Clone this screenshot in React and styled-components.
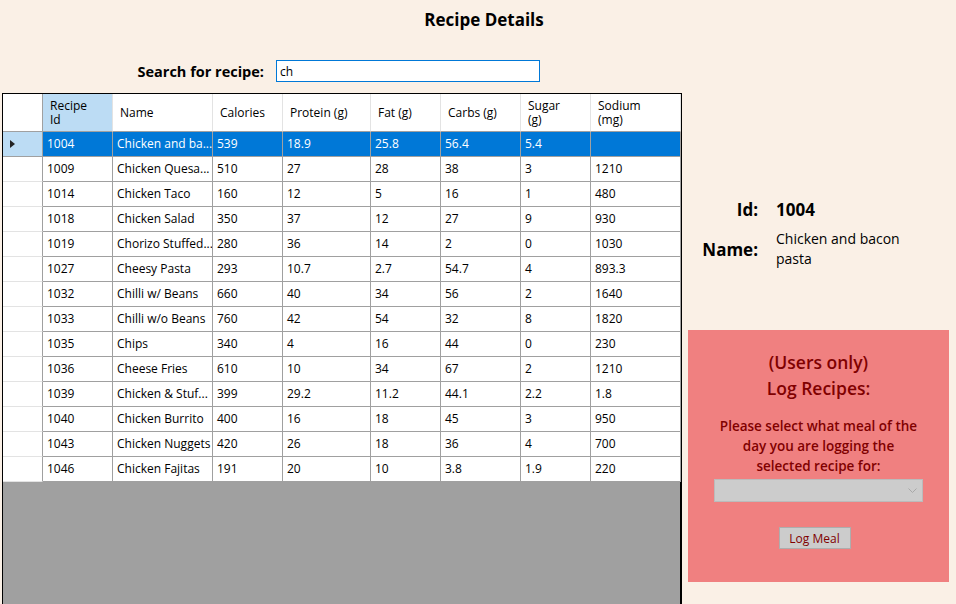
import React from "react";
import styled, { createGlobalStyle } from "styled-components";

const GlobalStyle = createGlobalStyle`
  html, body {
    margin: 0;
    padding: 0;
    background: #faf0e6;
    font-family: "Open Sans", "Noto Sans", "Liberation Sans", sans-serif;
  }
`;

const columns = [
  { key: "id", label: "Recipe\nId", w: 70, active: true },
  { key: "name", label: "Name", w: 100 },
  { key: "cal", label: "Calories", w: 70 },
  { key: "protein", label: "Protein (g)", w: 88 },
  { key: "fat", label: "Fat (g)", w: 70 },
  { key: "carbs", label: "Carbs (g)", w: 80 },
  { key: "sugar", label: "Sugar\n(g)", w: 70 },
  { key: "sodium", label: "Sodium\n(mg)", w: 90 },
];

const rows = [
  ["1004", "Chicken and ba...", "539", "18.9", "25.8", "56.4", "5.4", ""],
  ["1009", "Chicken Quesa...", "510", "27", "28", "38", "3", "1210"],
  ["1014", "Chicken Taco", "160", "12", "5", "16", "1", "480"],
  ["1018", "Chicken Salad", "350", "37", "12", "27", "9", "930"],
  ["1019", "Chorizo Stuffed...", "280", "36", "14", "2", "0", "1030"],
  ["1027", "Cheesy Pasta", "293", "10.7", "2.7", "54.7", "4", "893.3"],
  ["1032", "Chilli w/ Beans", "660", "40", "34", "56", "2", "1640"],
  ["1033", "Chilli w/o Beans", "760", "42", "54", "32", "8", "1820"],
  ["1035", "Chips", "340", "4", "16", "44", "0", "230"],
  ["1036", "Cheese Fries", "610", "10", "34", "67", "2", "1210"],
  ["1039", "Chicken & Stuf...", "399", "29.2", "11.2", "44.1", "2.2", "1.8"],
  ["1040", "Chicken Burrito", "400", "16", "18", "45", "3", "950"],
  ["1043", "Chicken Nuggets", "420", "26", "18", "36", "4", "700"],
  ["1046", "Chicken Fajitas", "191", "20", "10", "3.8", "1.9", "220"],
];

const template = `40px ${columns.map((c) => c.w + "px").join(" ")}`;

const Page = styled.div`
  width: 956px;
  height: 604px;
  overflow: hidden;
  display: flex;
  flex-direction: column;
`;

const Title = styled.h1`
  margin: 0;
  padding: 8px 0 0 12px;
  font-size: 17px;
  line-height: 24px;
  font-weight: 700;
  text-align: center;
  color: #000;
`;

const SearchRow = styled.div`
  display: flex;
  align-items: center;
  gap: 12px;
  margin-top: 28px;
  height: 22px;
`;

const SearchLabel = styled.label`
  width: 264px;
  text-align: right;
  font-size: 14.5px;
  font-weight: 700;
  color: #000;
`;

const SearchInput = styled.input`
  box-sizing: border-box;
  width: 264px;
  height: 22px;
  border: 1px solid #0078d7;
  background: #fff;
  padding: 0 3px;
  font-family: inherit;
  font-size: 12px;
  outline: none;
`;

const Main = styled.div`
  display: flex;
  align-items: flex-start;
  margin-top: 11px;
  flex: 1;
`;

const GridFrame = styled.div`
  box-sizing: border-box;
  margin-left: 2px;
  width: 680px;
  height: 520px;
  border: 1px solid #000;
  border-right-width: 2px;
  background: #a0a0a0;
`;

const GridRow = styled.div`
  display: grid;
  grid-template-columns: ${template};
  height: ${(p) => (p.$header ? "38px" : "25px")};
`;

const HeadCell = styled.div`
  box-sizing: border-box;
  display: flex;
  align-items: center;
  padding: 1px 0 0 7px;
  background: ${(p) => (p.$active ? "#bcdcf4" : "#fff")};
  border-right: 1px solid ${(p) => (p.$corner ? "#a0a0a0" : "#e3e3e3")};
  border-bottom: 1px solid #a0a0a0;
  font-size: 12px;
  line-height: 14px;
  white-space: pre-line;
  color: #000;
`;

const RowHead = styled.div`
  box-sizing: border-box;
  display: flex;
  align-items: center;
  padding-left: 7px;
  background: ${(p) => (p.$selected ? "#bcdcf4" : "#fff")};
  border-right: 1px solid #a0a0a0;
  border-bottom: 1px solid ${(p) => (p.$selected ? "#a0a0a0" : "#e3e3e3")};
`;

const Arrow = styled.span`
  width: 0;
  height: 0;
  border-top: 4px solid transparent;
  border-bottom: 4px solid transparent;
  border-left: 5px solid #222;
`;

const Cell = styled.div`
  box-sizing: border-box;
  padding: 0 2px 0 4px;
  line-height: 24px;
  font-size: 12px;
  white-space: nowrap;
  overflow: hidden;
  background: ${(p) => (p.$selected ? "#0078d7" : "#fff")};
  color: ${(p) => (p.$selected ? "#fff" : "#000")};
  border-right: 1px solid #a0a0a0;
  border-bottom: 1px solid #a0a0a0;
`;

const Side = styled.div`
  margin-left: 6px;
  width: 261px;
  display: flex;
  flex-direction: column;
  padding-top: 105px;
`;

const Info = styled.div`
  display: grid;
  grid-template-columns: 70px 140px;
  column-gap: 18px;
  row-gap: 8px;
  align-items: center;
`;

const InfoLabel = styled.div`
  text-align: right;
  font-size: 17px;
  font-weight: 700;
  color: #000;
`;

const InfoValue = styled.div`
  font-size: ${(p) => (p.$big ? "17px" : "14px")};
  font-weight: ${(p) => (p.$big ? 700 : 500)};
  line-height: 20px;
  color: #000;
`;

const LogPanel = styled.div`
  box-sizing: border-box;
  margin-top: 61px;
  width: 261px;
  height: 252px;
  background: #f08080;
  color: #800000;
  display: flex;
  flex-direction: column;
  align-items: center;
  padding-top: 19px;
  text-align: center;
`;

const LogHeading = styled.div`
  font-size: 17.5px;
  line-height: 26px;
  font-weight: 600;
`;

const Prompt = styled.div`
  margin-top: 15px;
  width: 200px;
  font-size: 13.5px;
  line-height: 20px;
  font-weight: 600;
`;

const Combo = styled.div`
  box-sizing: border-box;
  margin-top: 3px;
  width: 209px;
  height: 23px;
  background: #cccccc;
  border: 1px solid #bbbbbb;
  display: flex;
  align-items: center;
  justify-content: flex-end;
  padding-right: 5px;
`;

const LogButton = styled.button`
  box-sizing: border-box;
  margin: 25px 8px 0 0;
  width: 72px;
  height: 22px;
  background: #cccccc;
  border: 1px solid #adadad;
  color: #800000;
  font-family: inherit;
  font-size: 12px;
  padding: 0;
`;

export default function App() {
  return (
    <Page>
      <GlobalStyle />
      <Title>Recipe Details</Title>
      <SearchRow>
        <SearchLabel>Search for recipe:</SearchLabel>
        <SearchInput defaultValue="ch" />
      </SearchRow>
      <Main>
        <GridFrame>
          <GridRow $header>
            <HeadCell $corner />
            {columns.map((c) => (
              <HeadCell key={c.key} $active={c.active}>
                {c.label}
              </HeadCell>
            ))}
          </GridRow>
          {rows.map((r, i) => (
            <GridRow key={r[0]}>
              <RowHead $selected={i === 0}>{i === 0 && <Arrow />}</RowHead>
              {r.map((v, j) => (
                <Cell key={j} $selected={i === 0}>
                  {v}
                </Cell>
              ))}
            </GridRow>
          ))}
        </GridFrame>
        <Side>
          <Info>
            <InfoLabel>Id:</InfoLabel>
            <InfoValue $big>1004</InfoValue>
            <InfoLabel>Name:</InfoLabel>
            <InfoValue>Chicken and bacon pasta</InfoValue>
          </Info>
          <LogPanel>
            <LogHeading>
              (Users only)
              <br />
              Log Recipes:
            </LogHeading>
            <Prompt>
              Please select what meal of the day you are logging the selected
              recipe for:
            </Prompt>
            <Combo>
              <svg width="9" height="6" viewBox="0 0 9 6">
                <path d="M0.5 0.5 L4.5 4.5 L8.5 0.5" fill="none" stroke="#a8a8a8" strokeWidth="1" />
              </svg>
            </Combo>
            <LogButton>Log Meal</LogButton>
          </LogPanel>
        </Side>
      </Main>
    </Page>
  );
}
